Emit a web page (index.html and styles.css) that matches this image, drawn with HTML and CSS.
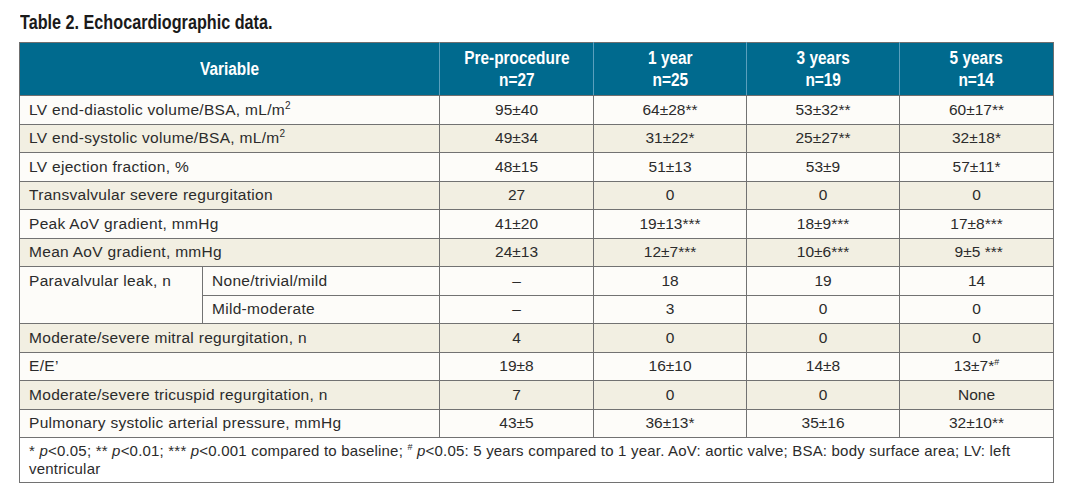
FILE: index.html
```html
<!DOCTYPE html>
<html>
<head>
<meta charset="utf-8">
<link rel="stylesheet" href="styles.css">
</head>
<body>
<div class="page">
  <h1 class="title"><span class="narrow-title">Table 2. Echocardiographic data.</span></h1>
  <table class="echo">
    <colgroup>
      <col class="c-var1"><col class="c-var2"><col class="c-d1"><col class="c-d2"><col class="c-d3"><col class="c-d4">
    </colgroup>
    <thead>
      <tr>
        <th colspan="2"><span class="narrow">Variable</span></th>
        <th><span class="narrow">Pre-procedure<br>n=27</span></th>
        <th><span class="narrow">1 year<br>n=25</span></th>
        <th><span class="narrow">3 years<br>n=19</span></th>
        <th><span class="narrow">5 years<br>n=14</span></th>
      </tr>
    </thead>
    <tbody>
      <tr class="w"><td colspan="2" class="lab">LV end-diastolic volume/BSA, mL/m<sup>2</sup></td><td>95±40</td><td>64±28**</td><td>53±32**</td><td>60±17**</td></tr>
      <tr class="b"><td colspan="2" class="lab">LV end-systolic volume/BSA, mL/m<sup>2</sup></td><td>49±34</td><td>31±22*</td><td>25±27**</td><td>32±18*</td></tr>
      <tr class="w"><td colspan="2" class="lab">LV ejection fraction, %</td><td>48±15</td><td>51±13</td><td>53±9</td><td>57±11*</td></tr>
      <tr class="b"><td colspan="2" class="lab">Transvalvular severe regurgitation</td><td>27</td><td>0</td><td>0</td><td>0</td></tr>
      <tr class="w"><td colspan="2" class="lab">Peak AoV gradient, mmHg</td><td>41±20</td><td>19±13***</td><td>18±9***</td><td>17±8***</td></tr>
      <tr class="b"><td colspan="2" class="lab">Mean AoV gradient, mmHg</td><td>24±13</td><td>12±7***</td><td>10±6***</td><td>&nbsp;9±5 ***</td></tr>
      <tr class="w"><td rowspan="2" class="lab top">Paravalvular leak, n</td><td class="lab">None/trivial/mild</td><td>–</td><td>18</td><td>19</td><td>14</td></tr>
      <tr class="w"><td class="lab">Mild-moderate</td><td>–</td><td>3</td><td>0</td><td>0</td></tr>
      <tr class="b"><td colspan="2" class="lab">Moderate/severe mitral regurgitation, n</td><td>4</td><td>0</td><td>0</td><td>0</td></tr>
      <tr class="w"><td colspan="2" class="lab">E/E’</td><td>19±8</td><td>16±10</td><td>14±8</td><td>13±7*<sup class="hash">#</sup></td></tr>
      <tr class="b"><td colspan="2" class="lab">Moderate/severe tricuspid regurgitation, n</td><td>7</td><td>0</td><td>0</td><td>None</td></tr>
      <tr class="w"><td colspan="2" class="lab">Pulmonary systolic arterial pressure, mmHg</td><td>43±5</td><td>36±13*</td><td>35±16</td><td>32±10**</td></tr>
    </tbody>
    <tfoot>
      <tr><td colspan="6" class="note">* <i>p</i>&lt;0.05; ** <i>p</i>&lt;0.01; *** <i>p</i>&lt;0.001 compared to baseline; <sup class="hash">#</sup>&nbsp;<i>p</i>&lt;0.05: 5 years compared to 1 year. AoV: aortic valve; BSA: body surface area; LV: left<br>ventricular</td></tr>
    </tfoot>
  </table>
</div>
</body>
</html>
```
FILE: styles.css
```css
html, body {
  margin: 0;
  padding: 0;
  background: #ffffff;
}

.page {
  padding: 11px 0 0 19px;
  width: 1034px;
}

.title {
  margin: 0 0 9px 1px;
  font-family: "Liberation Sans", Arial, sans-serif;
  font-weight: bold;
  font-size: 19.5px;
  line-height: 22px;
  color: #1a1a1a;
}

.narrow-title {
  display: inline-block;
  transform: scaleX(0.83);
  transform-origin: left center;
  white-space: nowrap;
}

.echo {
  width: 1034px;
  border-collapse: collapse;
  table-layout: fixed;
  font-family: "Liberation Sans", Arial, sans-serif;
  font-size: 15.5px;
  color: #2b2b2b;
}

.c-var1 { width: 183px; }
.c-var2 { width: 237px; }
.c-d1 { width: 154px; }
.c-d2 { width: 153px; }
.c-d3 { width: 153px; }
.c-d4 { width: 154px; }

.echo th {
  background: #006a8e;
  color: #ffffff;
  font-family: "Liberation Sans", Arial, sans-serif;
  font-weight: bold;
  font-size: 17.5px;
  line-height: 22px;
  height: 52px;
  padding: 0;
  text-align: center;
  vertical-align: middle;
  border: 1px solid #6f6f6f;
  border-left-color: #5b9fbd;
  border-right-color: #5b9fbd;
}

.echo thead th:first-child { border-left-color: #6f6f6f; }
.echo thead th:last-child { border-right-color: #6f6f6f; }

.narrow {
  display: inline-block;
  transform: scaleX(0.88);
  transform-origin: center center;
  white-space: nowrap;
}

.echo td {
  border: 1px solid #727272;
  height: 27.5px;
  padding: 0;
  text-align: center;
  vertical-align: middle;
  line-height: 18px;
  white-space: nowrap;
}

.echo td.lab {
  text-align: left;
  padding-left: 9px;
  letter-spacing: 0.3px;
}

.echo td.top {
  vertical-align: top;
  padding-top: 5px;
}

.echo tr.w td { background: #fdfcf9; }
.echo tr.b td { background: #f2efe2; }

.echo sup {
  font-size: 10px;
  line-height: 0;
  vertical-align: 6px;
}

.echo sup.hash {
  font-size: 9px;
}

.echo td.note {
  background: #ffffff;
  text-align: left;
  white-space: nowrap;
  font-size: 15px;
  letter-spacing: 0.2px;
  line-height: 18px;
  height: 36px;
  padding: 4px 14px 4px 9px;
  vertical-align: top;
}
```
